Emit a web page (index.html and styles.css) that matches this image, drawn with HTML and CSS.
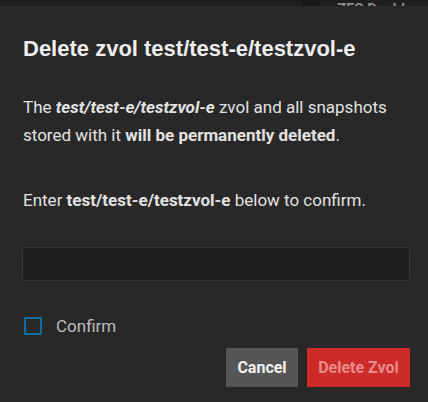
FILE: index.html
```html
<!DOCTYPE html>
<html>
<head>
<meta charset="utf-8">
<link rel="stylesheet" href="styles.css">
</head>
<body>
<div class="topbar">
  <div class="topbar-dark"></div>
  <div class="topbar-title">ZFS Dashboard</div>
</div>
<div class="dialog">
  <h1 class="title">Delete zvol test/test-e/testzvol-e</h1>
  <p class="message">The <b><i>test/test-e/testzvol-e</i></b> zvol and all snapshots stored with it <b>will be permanently deleted</b>.</p>
  <p class="confirm-text">Enter <b>test/test-e/testzvol-e</b> below to confirm.</p>
  <input class="name-input" type="text">
  <label class="checkbox-row">
    <span class="checkbox"></span>
    <span class="checkbox-label">Confirm</span>
  </label>
  <div class="actions">
    <button class="btn btn-cancel">Cancel</button>
    <button class="btn btn-delete">Delete Zvol</button>
  </div>
</div>
</body>
</html>
```
FILE: styles.css
```css
html, body {
  margin: 0;
  padding: 0;
  background: #282828;
  font-family: Roboto, "Liberation Sans", sans-serif;
  width: 428px;
  height: 402px;
  overflow: hidden;
}
.topbar {
  height: 6px;
  background: #1e1e1e;
  display: flex;
  overflow: hidden;
}
.topbar-dark {
  margin-left: 302px;
  width: 18px;
  flex-shrink: 0;
  background: #171717;
}
.topbar-title {
  margin-left: 17px;
  font-size: 15px;
  font-weight: bold;
  color: #8a8a8a;
  line-height: 15px;
  margin-top: 2px;
  white-space: nowrap;
}
.dialog {
  padding: 0 18px 0 23px;
}
.title {
  margin: 0;
  padding-top: 30px;
  font-family: "Liberation Sans", Arial, sans-serif;
  font-size: 22px;
  line-height: 26px;
  font-weight: bold;
  color: #eeeeee;
}
.message {
  margin: 31px 0 0;
  font-size: 17px;
  line-height: 28px;
  color: #e2e2e2;
}
.confirm-text {
  margin: 37px 0 0;
  font-size: 17px;
  line-height: 28px;
  color: #e2e2e2;
}
.name-input {
  display: block;
  box-sizing: border-box;
  width: 388px;
  height: 34px;
  margin: 33px 0 0 -1px;
  background: #1e1e1e;
  border: 1px solid #363636;
  border-radius: 2px;
  outline: none;
}
.checkbox-row {
  display: flex;
  align-items: center;
  margin-top: 36px;
  height: 18px;
}
.checkbox {
  box-sizing: border-box;
  width: 18px;
  height: 18px;
  flex-shrink: 0;
  margin-left: 1px;
  border: 2px solid #0f6ea0;
  border-radius: 1px;
}
.checkbox-label {
  margin-left: 14px;
  font-size: 17px;
  line-height: 18px;
  color: #bdbdbd;
}
.actions {
  display: flex;
  justify-content: flex-end;
  gap: 9px;
  margin-top: 13px;
}
.btn {
  height: 39px;
  border: none;
  border-radius: 0;
  font-family: Roboto, "Liberation Sans", sans-serif;
  font-size: 16px;
  font-weight: bold;
  padding: 0;
}
.btn-cancel {
  width: 72px;
  background: #565656;
  color: #f2f2f2;
}
.btn-delete {
  width: 103px;
  background: #ce2a2a;
  color: #e88a8a;
}
```
